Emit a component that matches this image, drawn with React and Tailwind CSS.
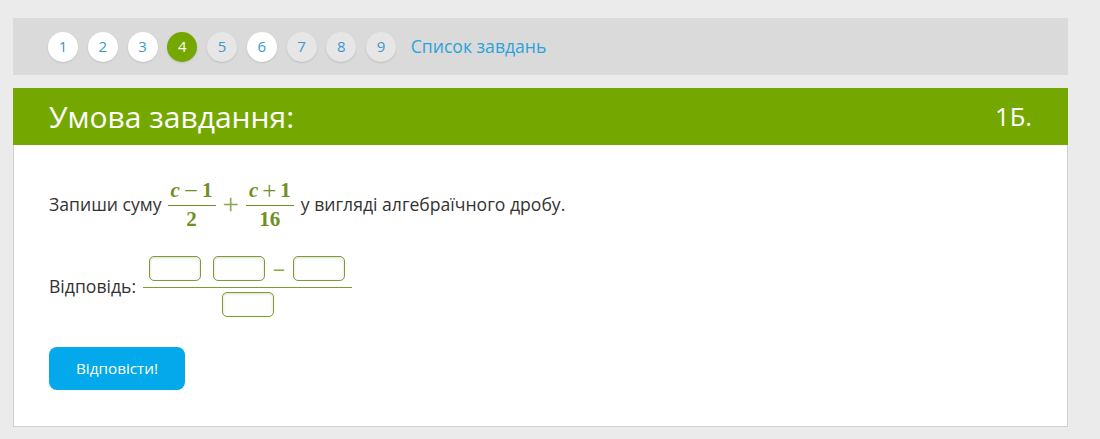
export default function App() {
  const tasks = [
    { n: 1, state: "done" },
    { n: 2, state: "done" },
    { n: 3, state: "done" },
    { n: 4, state: "active" },
    { n: 5, state: "todo" },
    { n: 6, state: "done" },
    { n: 7, state: "todo" },
    { n: 8, state: "todo" },
    { n: 9, state: "todo" },
  ];

  const circleStyle = {
    done: "bg-white text-[#3b97cf]",
    active: "bg-[#74a800] text-white",
    todo: "bg-[#e6e6e6] text-[#3b97cf]",
  };

  const Box = () => (
    <span className="inline-block w-[52px] h-[25px] rounded-[5px] border border-[#7a9d2c] bg-white shadow-[inset_0_1px_3px_rgba(0,0,0,0.15)]"></span>
  );

  // one stacked fraction, KaTeX-like
  const Frac = ({ num, den }) => (
    <span className="inline-flex flex-col items-center w-[48px]">
      <span className="h-[26px] leading-[26px] mb-[2px] flex items-center">{num}</span>
      <span className="self-stretch h-[1px] bg-[#6f9022]"></span>
      <span className="leading-[26px]">{den}</span>
    </span>
  );

  const Op = ({ children }) => (
    <span className="mx-[4px] font-normal text-[25px] leading-none">{children}</span>
  );

  return (
    <div className="min-h-[439px] bg-[#ebebeb] pl-[13px] pr-[32px] pt-[18px] font-['Open_Sans',sans-serif] text-[#333]">
      {/* task navigation */}
      <div className="h-[57px] bg-[#dadada] flex items-center pl-[35px] gap-[9.75px]">
        {tasks.map((t) => (
          <div
            key={t.n}
            className={`w-[30px] h-[30px] rounded-full flex items-center justify-center text-[15px] shadow-[0_1px_2px_rgba(0,0,0,0.12)] ${circleStyle[t.state]}`}
          >
            {t.n}
          </div>
        ))}
        <a className="ml-[5px] text-[17.6px] text-[#2aa3dc]">Список завдань</a>
      </div>

      {/* header */}
      <div className="mt-[13px] h-[57px] bg-[#74a800] flex items-center justify-between pl-[36px] pr-[36px] text-white">
        <span className="text-[30px]">Умова завдання:</span>
        <span className="text-[25.5px]">1Б.</span>
      </div>

      {/* body */}
      <div className="h-[282px] bg-white border-x border-b border-[#cfcfcf] pl-[35px] pt-[32px]">
        <div className="flex items-center text-[17.6px]">
          <span>Запиши суму</span>
          <span className="ml-[6px] inline-flex items-center font-['Liberation_Serif',serif] font-bold text-[21px] text-[#6f9022]">
            <Frac num={<><i>c</i><Op>−</Op>1</>} den="2" />
            <span className="mx-[7px] font-normal text-[29px] leading-none text-[#8aa847]">+</span>
            <Frac num={<><i>c</i><Op>+</Op>1</>} den="16" />
          </span>
          <span className="ml-[7px]">у вигляді алгебраїчного дробу.</span>
        </div>

        <div className="mt-[24px] flex items-center text-[17.6px]">
          <span>Відповідь:</span>
          <span className="ml-[7px] inline-flex flex-col w-[209px]">
            <span className="flex items-center pl-[6px] pb-[6px]">
              <Box />
              <span className="w-[12px]"></span>
              <Box />
              <span className="w-[28px] text-center text-[#8aa847] text-[22px] leading-none">−</span>
              <Box />
            </span>
            <span className="w-[209px] h-[1px] bg-[#7a9d2c]"></span>
            <span className="pt-[4px] flex justify-center">
              <Box />
            </span>
          </span>
        </div>

        <button className="mt-[30px] w-[136px] h-[43px] rounded-[8px] bg-[#03a9ea] text-white text-[15.3px]">
          Відповісти!
        </button>
      </div>
    </div>
  );
}
